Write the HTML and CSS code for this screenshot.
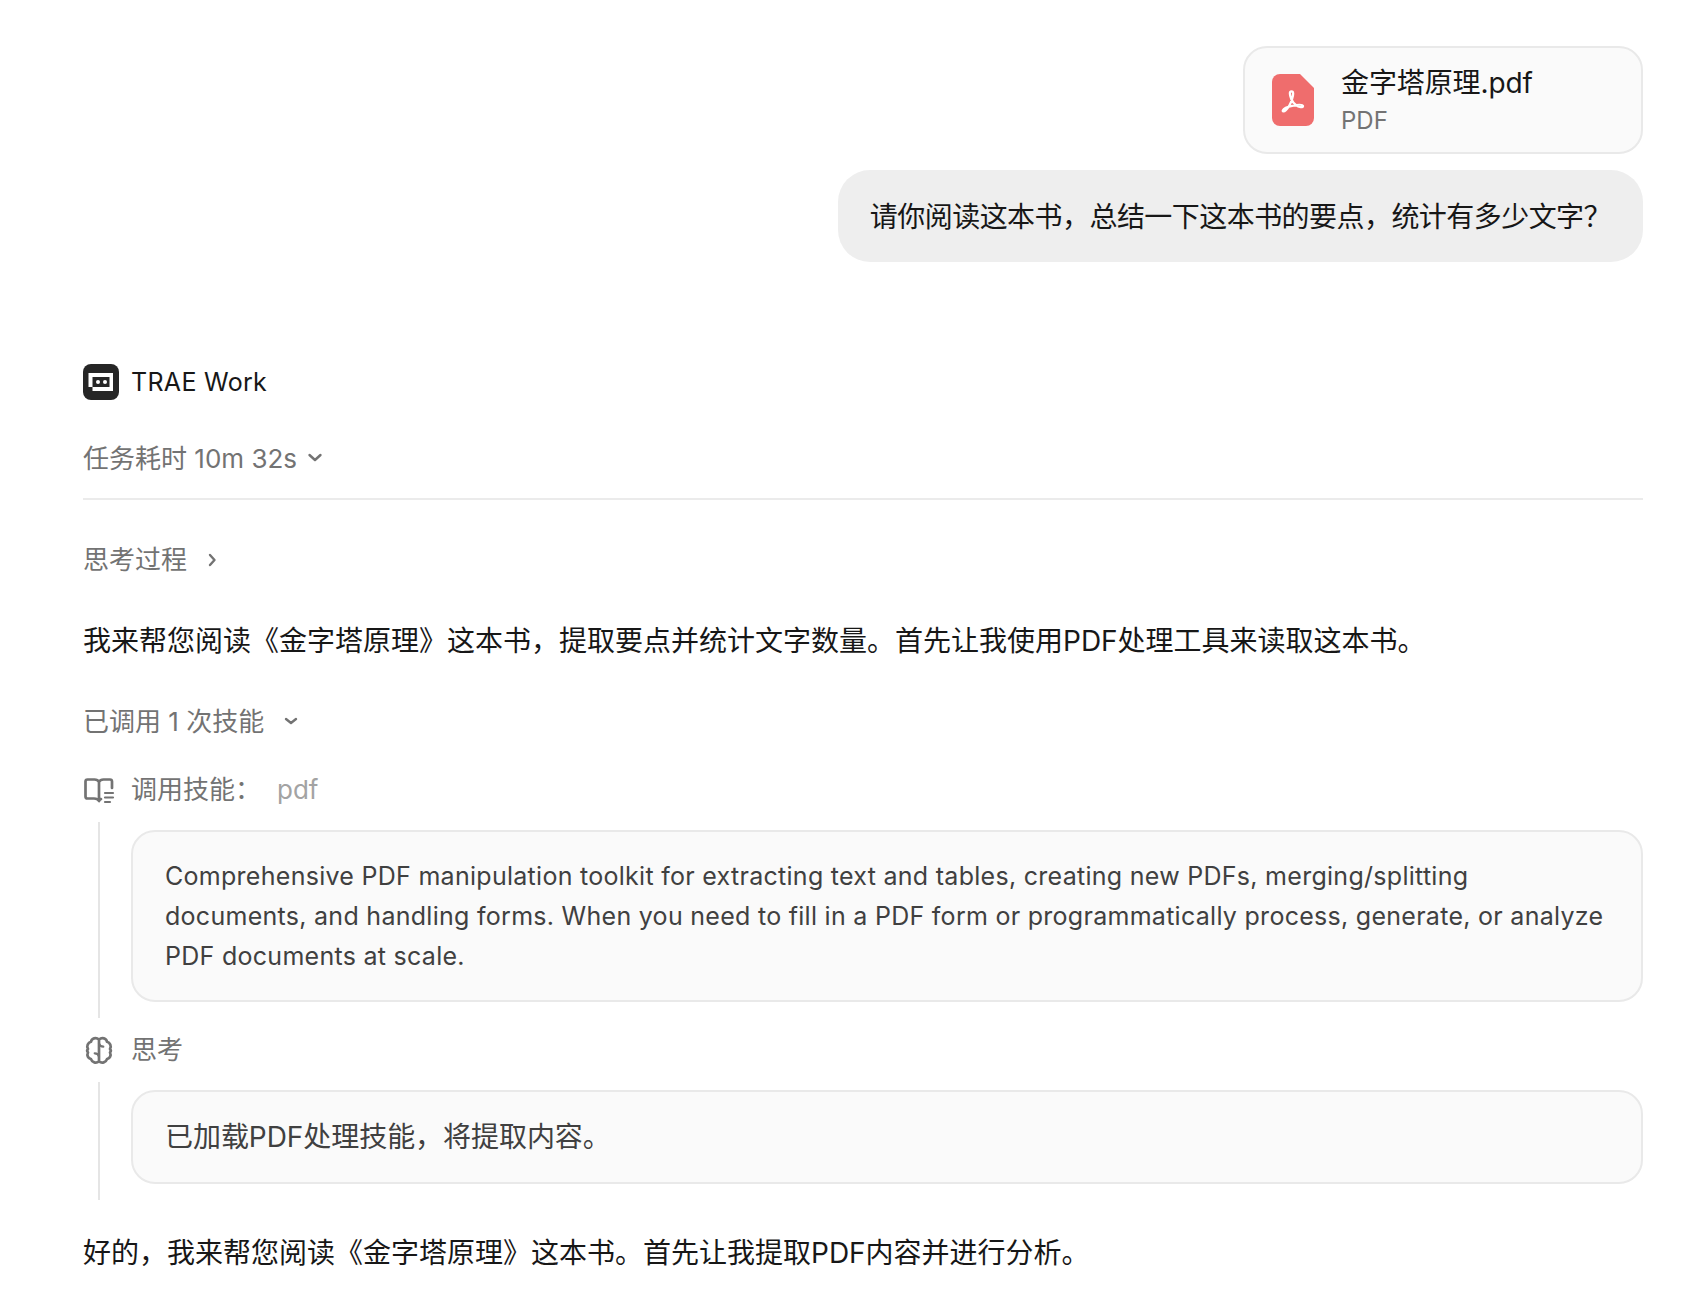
FILE: index.html
```html
<!DOCTYPE html>
<html lang="zh-CN">
<head>
  <meta charset="UTF-8">
  <meta name="viewport" content="width=device-width, initial-scale=1.0">
  <title>TRAE Work</title>
  <link rel="stylesheet" href="styles.css">
</head>
<body>
  <main class="chat">
    <section class="user-message">
      <div class="file-card">
        <svg class="file-icon" width="42" height="52" viewBox="0 0 42 52">
          <path d="M8 0H28L42 14V44a8 8 0 0 1-8 8H8a8 8 0 0 1-8-8V8a8 8 0 0 1 8-8z" fill="#ef6d6d"/>
          <g fill="none" stroke="#fff" stroke-width="2.3" stroke-linecap="round" stroke-linejoin="round">
            <path d="M19.3 25.2c-1.6-4.5-2.2-7.8.2-7.8s1.8 3.5.6 7.6c-1.2 3.8-3.7 8.7-6.3 11.2-1.9 1.9-3.6 1.4-2.9.1.9-1.9 5.2-3.7 9.3-4.5 4.2-.9 10.3-1.8 10.8.2.4 1.9-4.4 1.2-6.9-.9-2.1-1.7-3.7-3.3-4.800-5.900z"/>
          </g>
        </svg>
        <div class="file-info">
          <div class="file-name">金字塔原理.pdf</div>
          <div class="file-type">PDF</div>
        </div>
      </div>
      <div class="bubble">请你阅读这本书，总结一下这本书的要点，统计有多少文字？</div>
    </section>

    <section class="reply">
      <div class="agent">
        <svg width="36" height="36" viewBox="0 0 36 36">
          <rect width="36" height="36" rx="8" fill="#262626"/>
          <path d="M5.5 9H30V27H9.500V23H5.500zM9.500 13V23H26.500V13z" fill="#fff" fill-rule="evenodd"/>
          <circle cx="15" cy="18" r="2" fill="#fff"/>
          <circle cx="22" cy="18" r="2" fill="#fff"/>
        </svg>
        <span class="agent-name">TRAE Work</span>
      </div>

      <div class="elapsed">
        <span>任务耗时 10m 32s</span>
        <svg class="chevron" width="16" height="16" viewBox="0 0 16 16"><path d="M2.5 4l5.500 5 5.500-5"/></svg>
      </div>

      <div class="toggle">
        <span>思考过程</span>
        <svg class="chevron" width="16" height="16" viewBox="0 0 16 16"><path d="M6 3l4.500 5L6 13"/></svg>
      </div>

      <p class="text">我来帮您阅读《金字塔原理》这本书，提取要点并统计文字数量。首先让我使用PDF处理工具来读取这本书。</p>

      <div class="toggle calls">
        <span>已调用 1 次技能</span>
        <svg class="chevron" width="16" height="16" viewBox="0 0 16 16"><path d="M3 5l5 4 5-4"/></svg>
      </div>

      <div class="step">
        <div class="step-title">
          <svg class="step-icon" width="32" height="32" viewBox="0 0 32 32">
            <path d="M16 8c-1-2-2.500-2.500-4.500-2.500H4.500a2 2 0 0 0-2 2V22.500a2 2 0 0 0 2 2H11c2.500 0 4 .500 5 2.500V8c1-2 2.500-2.500 4.500-2.500H27a2 2 0 0 1 2 2V14M16 27c.3-.9.9-1.400 2-1.900"/>
            <path d="M22 19h8M22 23.500h8M22 28h5" stroke-width="2.2"/>
          </svg>
          <span>调用技能：</span>
          <span class="skill">pdf</span>
        </div>
        <div class="step-body">
          <div class="panel">Comprehensive PDF manipulation toolkit for extracting text and tables, creating new PDFs, merging/splitting documents, and handling forms. When you need to fill in a PDF form or programmatically process, generate, or analyze PDF documents at scale.</div>
        </div>
      </div>

      <div class="step">
        <div class="step-title">
          <svg class="step-icon" width="32" height="32" viewBox="0 0 32 32">
            <path d="M16 5.500c-3-2.500-7.500-1.300-8 2.300-3 .8-4.800 4.200-3 7.200-.9 1-.9 2.600 0 3.500-1.400 2.800 0 6 3 6.600 1 3.400 5.200 4.500 8 2.400V5.500c3-2.500 7.500-1.300 8 2.300 3 .8 4.800 4.200 3 7.200.9 1 .9 2.600 0 3.500 1.400 2.800 0 6-3 6.600-1 3.400-5.200 4.500-8 2.400"/>
            <path d="M16 9.500c.6 2.100 2 3.200 4.300 3.200M16 22.500c-.6-2.100-2-3.200-4.300-3.200" stroke-width="2.2"/>
          </svg>
          <span>思考</span>
        </div>
        <div class="step-body">
          <div class="panel panel-thought">已加载PDF处理技能，将提取内容。</div>
        </div>
      </div>

      <p class="text last">好的，我来帮您阅读《金字塔原理》这本书。首先让我提取PDF内容并进行分析。</p>
    </section>
  </main>
</body>
</html>
```

FILE: styles.css
```css
body {
  margin: 0;
  background-color: #ffffff;
  color: #171717;
  font-family: Inter, "Noto Sans CJK SC", sans-serif;
  font-size: 28px;
  overflow: hidden;
}

.chat {
  padding: 46px 53px 0 83px;
}

.user-message {
  display: flex;
  flex-direction: column;
  align-items: flex-end;
  gap: 16px;
}

.file-card {
  display: flex;
  align-items: center;
  gap: 27px;
  width: 400px;
  height: 108px;
  padding: 0 27px;
  box-sizing: border-box;
  background-color: #fafafa;
  border: 2px solid #e9e9e9;
  border-radius: 24px;
}

.file-info {
  padding-top: 2px;
}

.file-name {
  line-height: 40px;
  letter-spacing: -0.1px;
}

.file-type {
  font-size: 24px;
  line-height: 36px;
  color: #737373;
}

.bubble {
  padding: 26px 32px 24px;
  line-height: 42px;
  letter-spacing: -0.55px;
  background-color: #eeeeee;
  border-radius: 32px;
}

.reply {
  margin-top: 102px;
}

.agent {
  display: flex;
  align-items: center;
  gap: 12px;
  height: 36px;
}

.agent-name {
  font-size: 25px;
  letter-spacing: 0.3px;
}

.elapsed,
.toggle,
.step-title {
  display: flex;
  align-items: center;
  height: 40px;
  font-size: 26px;
  line-height: 40px;
  color: #737373;
}

.elapsed {
  margin-top: 39px;
  padding-bottom: 19px;
  gap: 10px;
  border-bottom: 2px solid #ebebeb;
}

.toggle {
  margin-top: 40px;
  gap: 17px;
}

.calls {
  gap: 19px;
}

.chevron {
  fill: none;
  stroke: #737373;
  stroke-width: 2.4;
  stroke-linecap: round;
  stroke-linejoin: round;
}

.text {
  margin: 40px 0 0;
  line-height: 42px;
}

.step {
  margin-top: 12px;
}

.toggle + .step {
  margin-top: 28px;
}

.step-icon {
  margin-right: 16px;
  fill: none;
  stroke: #737373;
  stroke-width: 2.7;
  stroke-linecap: round;
  stroke-linejoin: round;
}

.skill {
  margin-left: 16px;
  color: #a3a3a3;
}

.step-body {
  margin: 12px 0 0 15px;
  padding: 8px 0 16px 31px;
  border-left: 2px solid #e5e5e5;
}

.panel {
  padding: 24px 32px;
  font-size: 25px;
  line-height: 40px;
  letter-spacing: 0.28px;
  color: #404040;
  background-color: #fafafa;
  border: 2px solid #e9e9e9;
  border-radius: 24px;
}

.panel-thought {
  font-size: 28px;
  line-height: 42px;
  letter-spacing: -0.05px;
}

.last {
  margin-top: 32px;
}
```
